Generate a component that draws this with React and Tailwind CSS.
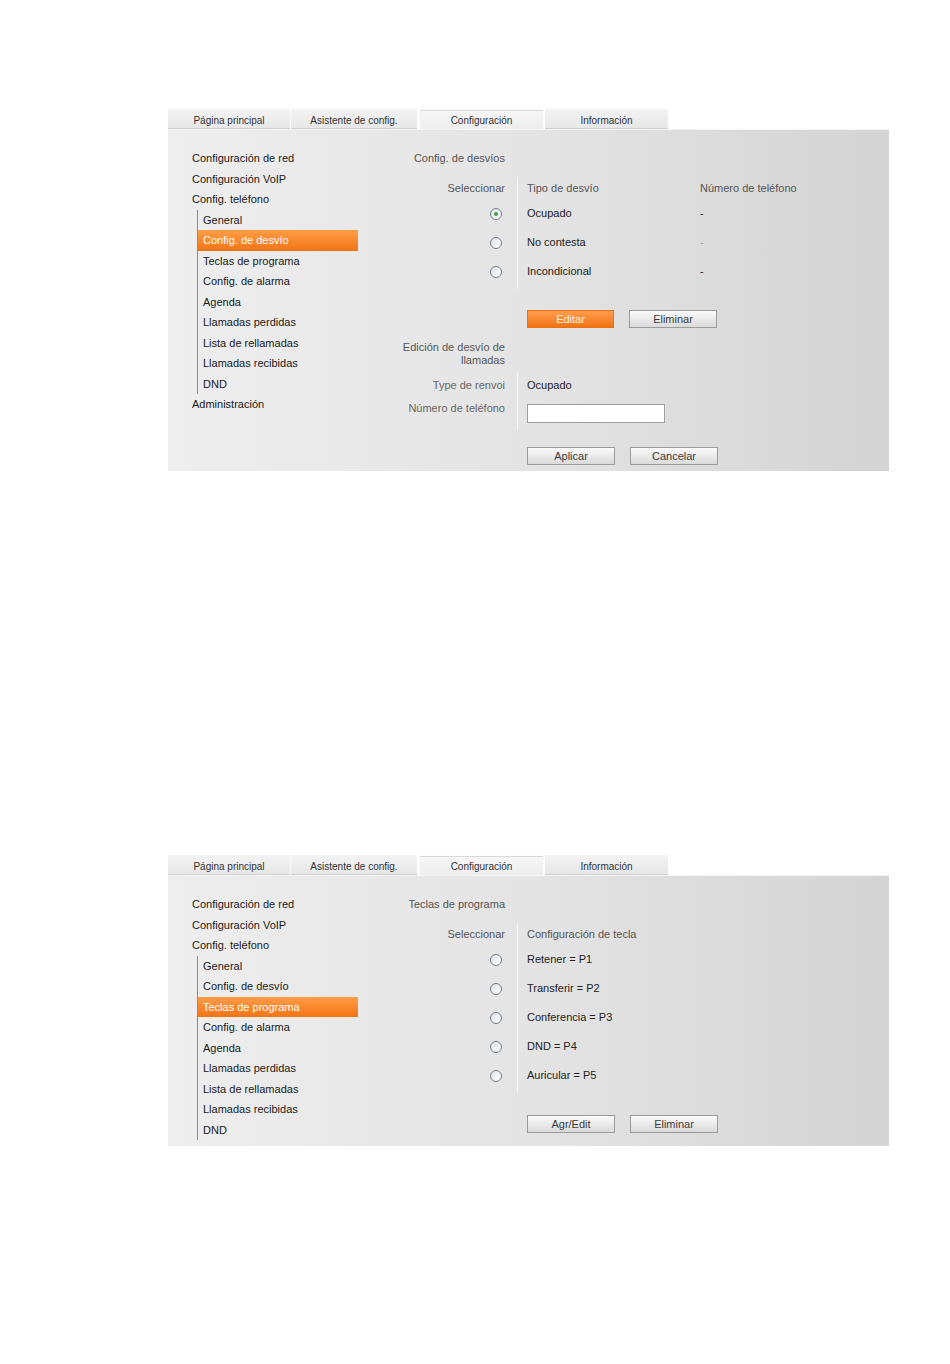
import React from "react";

const tabs = [
    { label: "Página principal", w: "w-[122px]" },
    { label: "Asistente de config.", w: "w-[126px]" },
    { label: "Configuración", w: "w-[125px]", active: true },
    { label: "Información", w: "w-[123px]" },
];

const subItems = [
    "General",
    "Config. de desvío",
    "Teclas de programa",
    "Config. de alarma",
    "Agenda",
    "Llamadas perdidas",
    "Lista de rellamadas",
    "Llamadas recibidas",
    "DND",
];

const Tabs = () => (
    <div className="flex gap-[1px] h-[20px] text-[10px] text-[#333]">
        {tabs.map((t) => (
            <div
                key={t.label}
                className={
                    t.active
                        ? `${t.w} ml-[1px] pt-[2px] flex items-center justify-center bg-gradient-to-b from-[#f7f7f7] to-[#ededed] border border-b-0 border-[#fbfbfb] shadow-[inset_0_1px_0_#d9d9d9]`
                        : `${t.w} pt-[3px] flex items-center justify-center bg-gradient-to-b from-[#f3f3f3] to-[#e7e7e7] border-b border-[#d0d0d0]`
                }
            >
                {t.label}
            </div>
        ))}
    </div>
);

const Nav = ({ active }) => (
    <div className="w-[212px] shrink-0 pl-[24px] pt-[18px] text-[11px] text-[#1a1a1a]">
        <div className="h-[20.5px] leading-[20.5px]">Configuración de red</div>
        <div className="h-[20.5px] leading-[20.5px]">Configuración VoIP</div>
        <div className="h-[20.5px] leading-[20.5px]">Config. teléfono</div>
        <div className="ml-[5px] w-[161px] border-l border-[#8c8c8c]">
            {subItems.map((item) =>
                item === active ? (
                    <div
                        key={item}
                        className="h-[20.5px] leading-[20.5px] pl-[5px] bg-gradient-to-b from-[#ff9d45] to-[#f2740f] text-white"
                    >
                        {item}
                    </div>
                ) : (
                    <div key={item} className="h-[20.5px] leading-[20.5px] pl-[5px]">
                        {item}
                    </div>
                )
            )}
        </div>
        <div className="h-[20.5px] leading-[20.5px]">Administración</div>
    </div>
);

const Radio = ({ checked }) => (
    <span className="w-[12px] h-[12px] rounded-full border border-[#6f7d8e] bg-gradient-to-br from-[#dde2e8] to-white flex items-center justify-center">
        {checked && <span className="w-[4px] h-[4px] rounded-full bg-[#3f9f3f]" />}
    </span>
);

const Button = ({ children, primary }) => (
    <div
        className={
            primary
                ? "w-[87px] h-[18px] flex items-center justify-center border border-[#e8700f] bg-gradient-to-b from-[#ff9d4a] to-[#f2730f] text-[#fff3e8] text-[11px]"
                : "w-[88px] h-[18px] flex items-center justify-center border border-[#9b9b9b] bg-gradient-to-b from-[#fbfbfb] to-[#dadada] text-[#3c3c3c] text-[11px]"
        }
    >
        {children}
    </div>
);

// one row of the label | value table, with the light divider between
const Row = ({ h, left, children, alignTop }) => (
    <div className={`flex ${h}`}>
        <div
            className={`w-[137px] shrink-0 pr-[12px] flex justify-end ${alignTop ? "items-start" : "items-center"}`}
        >
            {left}
        </div>
        <div className={`flex-1 border-l border-[#f6f6f6] pl-[9px] flex ${alignTop ? "items-start" : "items-center"}`}>
            {children}
        </div>
    </div>
);

const ButtonRow = ({ children, mt }) => (
    <div className={`flex gap-[15px] ml-[147px] ${mt}`}>{children}</div>
);

const DesvioContent = () => (
    <div className="flex-1 pt-[18px] text-[11px]">
        <div className="w-[137px] pr-[12px] h-[20px] leading-[20px] text-right text-[#555]">
            Config. de desvíos
        </div>
        <div className="mt-[9px]">
            <Row h="h-[22px]" left={<span className="text-[#555]">Seleccionar</span>}>
                <span className="w-[173px] text-[#555]">Tipo de desvío</span>
                <span className="text-[#555]">Número de teléfono</span>
            </Row>
            {[
                { t: "Ocupado", d: "-", c: true },
                { t: "No contesta", d: "-", light: true },
                { t: "Incondicional", d: "-" },
            ].map((r) => (
                <Row key={r.t} h="h-[29px]" left={<span className="pr-[3px]"><Radio checked={r.c} /></span>}>
                    <span className="w-[173px] text-[#222]">{r.t}</span>
                    <span className={r.light ? "text-[#999]" : "text-[#222]"}>{r.d}</span>
                </Row>
            ))}
            <Row h="h-[3px]" />
        </div>
        <ButtonRow mt="mt-[21px]">
            <Button primary>Editar</Button>
            <Button>Eliminar</Button>
        </ButtonRow>
        <div className="mt-[13px] w-[137px] pr-[12px] text-right leading-[13px] text-[#555]">
            Edición de desvío de llamadas
        </div>
        <div className="mt-[6px]">
            <Row h="h-[24px]" left={<span className="text-[#666]">Type de renvoi</span>}>
                <span className="text-[#222]">Ocupado</span>
            </Row>
            <Row
                h="h-[33px]"
                alignTop
                left={<span className="pt-[5px] leading-[13px] text-[#666]">Número de teléfono</span>}
            >
                <div className="mt-[7px] w-[138px] h-[19px] bg-white border border-[#a0a0a0]" />
            </Row>
        </div>
        <ButtonRow mt="mt-[17px]">
            <Button>Aplicar</Button>
            <Button>Cancelar</Button>
        </ButtonRow>
    </div>
);

const TeclasContent = () => (
    <div className="flex-1 pt-[18px] text-[11px]">
        <div className="w-[137px] pr-[12px] h-[20px] leading-[20px] text-right text-[#555]">
            Teclas de programa
        </div>
        <div className="mt-[9px]">
            <Row h="h-[22px]" left={<span className="text-[#555]">Seleccionar</span>}>
                <span className="text-[#555]">Configuración de tecla</span>
            </Row>
            {["Retener = P1", "Transferir = P2", "Conferencia = P3", "DND = P4", "Auricular = P5"].map((k) => (
                <Row key={k} h="h-[29px]" left={<span className="pr-[3px]"><Radio /></span>}>
                    <span className="text-[#222]">{k}</span>
                </Row>
            ))}
            <Row h="h-[3px]" />
        </div>
        <ButtonRow mt="mt-[22px]">
            <Button>Agr/Edit</Button>
            <Button>Eliminar</Button>
        </ButtonRow>
    </div>
);

const Screen = ({ active, height, children }) => (
    <div className="w-[721px]">
        <Tabs />
        <div
            className={`${height} overflow-hidden flex bg-gradient-to-r from-[#eeeeee] via-[#e4e4e4] to-[#d4d4d4] border-t border-[#f4f4f4]`}
        >
            <Nav active={active} />
            {children}
        </div>
    </div>
);

const App = () => {
    return (
        <div className="min-h-[1364px] bg-white pl-[168px] pt-[109px] font-['Liberation_Sans',Arial,sans-serif]">
            <Screen active="Config. de desvío" height="h-[342px]">
                <DesvioContent />
            </Screen>
            <div className="h-[384px]" />
            <Screen active="Teclas de programa" height="h-[271px]">
                <TeclasContent />
            </Screen>
        </div>
    );
};

export default App;
